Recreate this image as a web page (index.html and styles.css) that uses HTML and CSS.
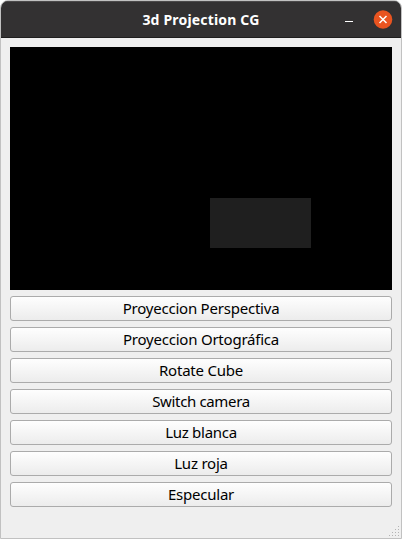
FILE: index.html
```html
<!DOCTYPE html>
<html lang="es">
<head>
<meta charset="utf-8">
<title>3d Projection CG</title>
<link rel="stylesheet" href="styles.css">
</head>
<body>
<div class="window">
  <header class="titlebar">
    <h1 class="title">3d Projection CG</h1>
    <div class="controls">
      <span class="minimize"></span>
      <svg class="close" width="20" height="19" viewBox="0 0 20 19"><circle cx="10" cy="9.5" r="9.3" fill="#e95420"/><path d="M6.5 6l7 7M13.5 6l-7 7" stroke="#fff" stroke-width="1.5"/></svg>
    </div>
  </header>
  <main class="content">
    <div class="viewport"><div class="face"></div></div>
    <button class="btn perspective"><span>Proyeccion Perspectiva</span></button>
    <button class="btn orthographic"><span>Proyeccion Ortográfica</span></button>
    <button class="btn rotate"><span>Rotate Cube</span></button>
    <button class="btn camera"><span>Switch camera</span></button>
    <button class="btn white"><span>Luz blanca</span></button>
    <button class="btn red"><span>Luz roja</span></button>
    <button class="btn specular"><span>Especular</span></button>
  </main>
  <svg class="grip" width="10" height="10" viewBox="0 0 10 10"><path fill="#b4b4b4" d="M9 0h1v1h-1zM6 3h1v1h-1zM9 3h1v1h-1zM3 6h1v1h-1zM6 6h1v1h-1zM9 6h1v1h-1zM0 9h1v1h-1zM3 9h1v1h-1zM6 9h1v1h-1zM9 9h1v1h-1z"/></svg>
</div>
</body>
</html>
```
FILE: styles.css
```css
* { box-sizing: border-box; }
body { margin: 0; background: #fff; font-family: "Noto Sans", sans-serif; }
.window {
  position: relative;
  width: 402px;
  height: 539px;
  border: 1px solid #c1c1c1;
  border-radius: 8px 8px 0 0;
  background: #efefef;
  overflow: hidden;
}
.titlebar {
  display: grid;
  grid-template-columns: 58px 1fr 58px;
  align-items: center;
  height: 37px;
  background: #333132;
  border-top: 1px solid #4b494a;
  border-bottom: 1px solid #1f1e1e;
}
.title {
  grid-column: 2;
  margin: 0;
  color: #fff;
  font-size: 14px;
  font-weight: 700;
  letter-spacing: 0.18px;
  line-height: 20px;
  text-align: center;
  white-space: nowrap;
}
.controls {
  display: flex;
  align-items: center;
  justify-content: flex-end;
  gap: 20px;
  padding-right: 8px;
  margin-left: -20px;
}
.minimize { width: 8px; height: 1px; background: #fff; margin-top: 3px; }
.close { display: block; }
.content {
  display: flex;
  flex-direction: column;
  gap: 6px;
  padding: 9px;
}
.viewport { height: 243px; padding: 151px 0 0 200px; background: #000; }
.face { width: 101px; height: 50px; background: #1f1f1f; }
.btn {
  display: flex;
  align-items: center;
  justify-content: center;
  height: 25px;
  padding: 0;
  border: 1px solid #ababab;
  border-radius: 3px;
  background: linear-gradient(#fefefe, #ececec);
  color: #000;
  font: 15px/21px "Noto Sans", sans-serif;
  letter-spacing: -0.22px;
  white-space: nowrap;
}
.camera { letter-spacing: -0.35px; }
.white { letter-spacing: -0.28px; }
.grip { position: absolute; right: 2px; bottom: 2px; }
```
